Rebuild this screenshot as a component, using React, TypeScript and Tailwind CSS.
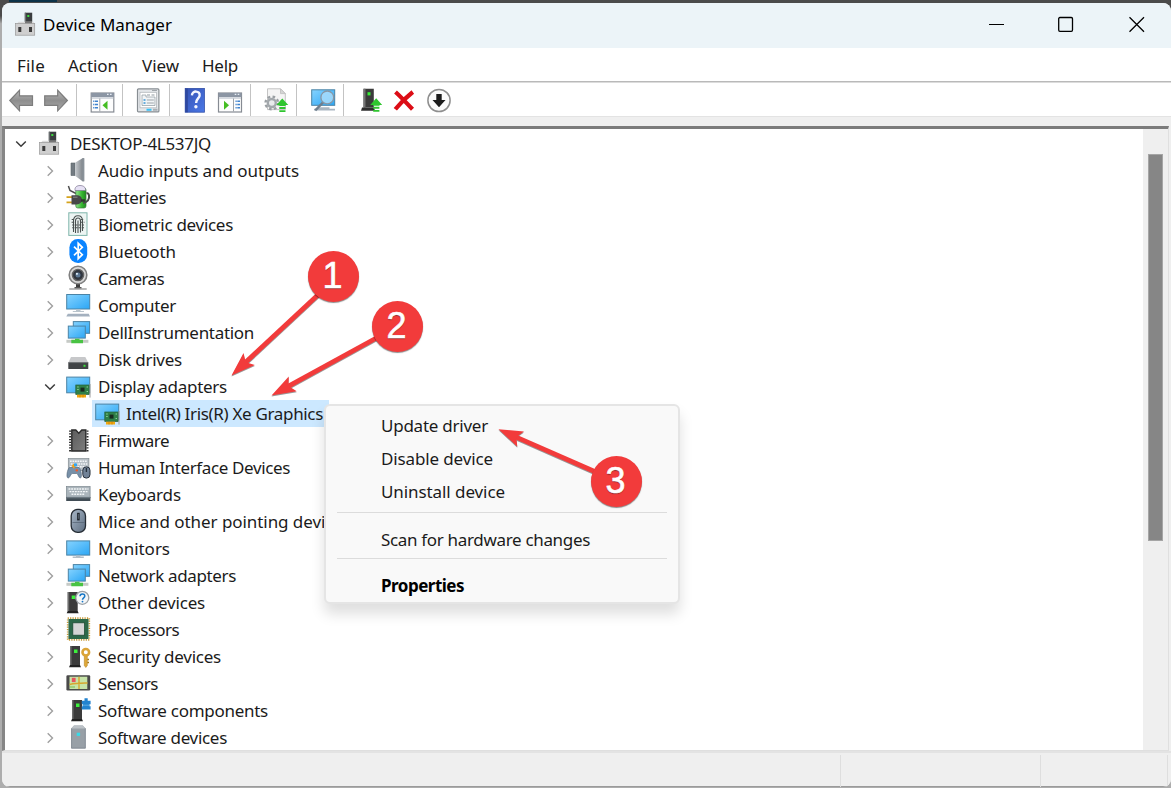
import React, { useLayoutEffect, useRef, useState } from 'react';

interface LabelProps {
  text: string;
  width: number;
  className?: string;
}

// Text run whose tracking is adjusted so it fills a fixed advance width
const Label: React.FC<LabelProps> = ({ text, width, className = '' }) => {
  const ref = useRef<HTMLSpanElement>(null);
  const [spacing, setSpacing] = useState(0);

  useLayoutEffect(() => {
    if (!ref.current) return;
    const natural = ref.current.getBoundingClientRect().width;
    setSpacing((width - natural) / text.length);
  }, [text, width]);

  return (
    <span ref={ref} style={{ letterSpacing: `${spacing}px` }} className={`whitespace-nowrap ${className}`}>
      {text}
    </span>
  );
};

// Shared gradients for the device icons
const IconDefs = () => (
  <svg width="0" height="0" className="absolute">
    <defs>
      <linearGradient id="screen" x1="0" y1="0" x2="1" y2="1">
        <stop offset="0" stopColor="#85d3ff" />
        <stop offset="1" stopColor="#2ba6f5" />
      </linearGradient>
      <linearGradient id="steel" x1="0" y1="0" x2="1" y2="0">
        <stop offset="0" stopColor="#c9cdd1" />
        <stop offset="1" stopColor="#70767c" />
      </linearGradient>
      <linearGradient id="arrowGray" x1="0" y1="0" x2="0" y2="1">
        <stop offset="0" stopColor="#b9b9b9" />
        <stop offset="0.5" stopColor="#8e8e8e" />
        <stop offset="1" stopColor="#a9a9a9" />
      </linearGradient>
      <linearGradient id="green" x1="0" y1="0" x2="1" y2="0">
        <stop offset="0" stopColor="#92e58c" />
        <stop offset="0.6" stopColor="#35b52f" />
        <stop offset="1" stopColor="#208b20" />
      </linearGradient>
      <linearGradient id="helpBlue" x1="0" y1="0" x2="1" y2="1">
        <stop offset="0" stopColor="#3552b4" />
        <stop offset="1" stopColor="#4a78e6" />
      </linearGradient>
      <linearGradient id="mouse" x1="0" y1="0" x2="1" y2="1">
        <stop offset="0" stopColor="#a9b8c8" />
        <stop offset="1" stopColor="#5d6d80" />
      </linearGradient>
      <linearGradient id="chip" x1="0" y1="0" x2="1" y2="1">
        <stop offset="0" stopColor="#5c5c5c" />
        <stop offset="1" stopColor="#7d7d7d" />
      </linearGradient>
    </defs>
  </svg>
);

const Screen = ({ x, y, w, h }: { x: number; y: number; w: number; h: number }) => (
  <rect x={x + 0.5} y={y + 0.5} width={w - 1} height={h - 1} fill="url(#screen)" stroke="#4a83a5" />
);

const Tower = ({ x, y = 2 }: { x: number; y?: number }) => (
  <g>
    <rect x={x} y={y} width="10" height="19" fill="#3b3b3b" />
    <path d={`M${x} ${y}h1.5v19h-1.5z`} fill="#6d6d6d" />
    <rect x={x + 4} y={y + 3.5} width="3.5" height="3.5" fill="#3df03d" />
    <path d={`M${x} ${y + 19}h10l1 2.3h-12z`} fill="#222" />
  </g>
);

const GreenUp = ({ x, y }: { x: number; y: number }) => (
  <g transform={`translate(${x} ${y})`} fill="#2fc52f">
    <path d="M6 0l6 6.6H9.3v.9H2.9v-.9H0z" />
    <path d="M3 8.5h6.2v2H3zM3 11.7h6.2v1.8H3z" />
  </g>
);

const drawings: Record<string, React.ReactNode> = {
  pc: (
    <g>
      <rect x="10.8" y="0.7" width="7.4" height="11" fill="#3a3d3f" />
      <path d="M10.8.7h1.3v10h-1.3z" fill="#686c6e" />
      <rect x="13.3" y="3" width="2" height="2" fill="#3edb3e" />
      <path d="M4.5 9.7h15l1.4 4H1.3z" fill="#dadada" />
      <rect x="1.6" y="11.6" width="19.1" height="11.6" fill="#cfcfcf" stroke="#979797" strokeWidth=".7" />
      <path d="M11 9.5h7v1.8h-7z" fill="#777" />
      <rect x="4.3" y="15" width="3" height="5" fill="#3b3b3b" />
      <rect x="15" y="15" width="3" height="5" fill="#3b3b3b" />
    </g>
  ),
  audio: (
    <g>
      <path d="M5 5h4v12.5H5z" fill="#737b82" stroke="#5d646a" strokeWidth=".6" />
      <path d="M9 4.8L16.5.2h1.7v23h-1.7L9 17.8z" fill="url(#steel)" />
      <path d="M16.3.2h1.9v23h-1.9z" fill="#8a9299" />
    </g>
  ),
  battery: (
    <g>
      <path d="M2.4.9L4 5.4 11 9" fill="none" stroke="#4f4f4f" strokeWidth="1.5" />
      <rect x="9.8" y="3" width="10.2" height="20" rx="2" fill="url(#green)" stroke="#3c7a3c" strokeWidth=".7" />
      <path d="M9 5.5C8.5 2 11 .5 14 .5s6 1.5 5.5 5z" fill="#e6e1f4" stroke="#7d7690" strokeWidth=".7" />
      <path d="M17 18c5-1 6.5-4 6-7.500q-.6-3-2.500-2" fill="none" stroke="#4a4a4a" strokeWidth="2" />
      <path d="M.5 12.1h6M.5 17.4h6" stroke="#d5a31c" strokeWidth="1.8" />
      <path d="M5.5 10.300h5c3.500 0 5.500 2 5.500 4.500s-2 4.700-5.500 4.700h-5z" fill="#484848" />
      <path d="M7 12.200h4.500" stroke="#8a8a8a" strokeWidth="1" />
      <path d="M15 15.500h4" fill="none" stroke="#333" strokeWidth="2.4" />
    </g>
  ),
  biometric: (
    <g>
      <rect x="2.8" y=".8" width="18.2" height="22.6" fill="#edf5f3" stroke="#7fb5ab" />
      <g fill="none" stroke="#4a5150" strokeWidth="1.1">
        <path d="M7.5 20v-11q0-5.2 4.5-5.2t4.5 5.2v10" />
        <path d="M9.5 21v-12q0-3 2.5-3t2.5 3v11.5" />
        <path d="M12 21V8.5" />
        <path d="M5.7 7.5h3M5.6 10.2h4M15 7.5h3M14.5 10.2h4M6.2 13h12M6.2 15.8h12" strokeDasharray="2.2 1" />
      </g>
    </g>
  ),
  bluetooth: (
    <g>
      <rect x="3.4" y="0" width="17.8" height="24" rx="8.5" fill="#0a84ff" />
      <path d="M8 7.7l8.3 8-4.1 4V4.3l4.1 4-8.3 8" fill="none" stroke="#fff" strokeWidth="1.7" />
    </g>
  ),
  camera: (
    <g>
      <path d="M10 18h4v4h-4z" fill="#3d3d3d" />
      <path d="M3.3 23h17.4" stroke="#9c9c9c" strokeWidth="1.4" />
      <path d="M8.5 21.7h7" stroke="#555" strokeWidth="1.4" />
      <circle cx="12" cy="9" r="8.8" fill="#d9d9d9" stroke="#808080" strokeWidth="1.6" />
      <circle cx="12" cy="9" r="5.6" fill="#30363f" stroke="#656565" strokeWidth="1.4" />
      <circle cx="12" cy="9" r="2.5" fill="#5d7894" />
      <circle cx="10.9" cy="7.8" r="1.1" fill="#dbe9f5" />
    </g>
  ),
  computer: (
    <g>
      <Screen x={0.2} y={1} w={24} h={15.5} />
      <path d="M10 16.5h4.5v1.6H18v1H6.8v-1H10z" fill="#b9c4cc" />
      <path d="M1.8 20.8h21l1.2 2.7H.3z" fill="#a4b1bf" />
    </g>
  ),
  network: (
    <g>
      <Screen x={6.8} y={1.1} w={17.3} h={12.7} />
      <Screen x={1.8} y={5.6} w={18} h={13} />
      <path d="M.4 21.3h22" stroke="#c6cac6" strokeWidth="3" />
      <path d="M9 18.8h4.5v1H17v3.4H5.3v-3.4H9z" fill="#49c343" />
    </g>
  ),
  disk: (
    <g>
      <path d="M5 10h14.3l3 5.7H2.3z" fill="#c7c8ca" />
      <rect x="2.3" y="15.5" width="20" height="6.5" rx=".6" fill="#414446" />
      <path d="M2.3 15.6h20" stroke="#6f7274" />
      <rect x="17.5" y="17.8" width="2" height="2" fill="#39e339" />
    </g>
  ),
  display: (
    <g>
      <Screen x={0.2} y={2.6} w={24} h={16.7} />
      <rect x="9.8" y="11" width="13.4" height="9.5" fill="#2f8049" stroke="#24613a" strokeWidth=".7" />
      <rect x="14.500" y="13.600" width="4" height="4" fill="#1a2a20" />
      <path d="M11.2 13h1.5M11.2 15.5h1.5M20.6 13h1.4M20.6 17.5h1.4" stroke="#8fd39c" />
      <path d="M11 20.7h9v2.8h-9z" fill="#f2a80f" />
      <path d="M14 20.7v2.8M17 20.7v2.8" stroke="#c87d06" strokeWidth=".7" />
      <path d="M24 10v13.6" stroke="#999" />
    </g>
  ),
  firmware: (
    <g>
      <path d="M5.8 2h4l3 3.200 3-3.200h4v21H5.800z" fill="url(#chip)" stroke="#2b2b2b" strokeWidth="1.4" />
      <path d="M4.1 2.500v21M21.500 2.500v21" stroke="#2b2b2b" strokeWidth="2" strokeDasharray="1.3 1.5" />
    </g>
  ),
  hid: (
    <g>
      <rect x="2.3" y="3.6" width="20.6" height="12" fill="#b8c0c6" stroke="#818a91" strokeWidth=".7" />
      <path d="M4 6.3h17.5M4.8 9h16.5M4 11.7h17" stroke="#f2f5f7" strokeWidth="1.4" strokeDasharray="1.7 .8" />
      <path d="M3.5 12.5h9.5c2.5 2.5 3 9.5 1.8 10.3-2 1-2.5-3.6-4-4.3H6.3c-2 .6-2.5 5.3-4.6 4.3-1.5-.8-.6-8.3 1.8-10.3z" fill="#7890a8" stroke="#4d6175" strokeWidth=".6" />
      <path d="M5.5 11l2.3-2.6 2.3 2.6-2.3 2.6z" fill="#f5a11b" />
      <path d="M8 8.4h3v3H8z" fill="#32a5f0" />
      <circle cx="10.8" cy="15.3" r="1.2" fill="#f15a29" />
      <rect x="16.8" y="11.8" width="7.2" height="11.3" rx="3.5" fill="#718297" stroke="#27303b" />
      <path d="M20.4 13v4" stroke="#27303b" strokeWidth="1.3" />
    </g>
  ),
  keyboard: (
    <g>
      <rect x=".5" y="4.6" width="23.6" height="10.6" fill="#aab4bb" stroke="#7a868e" strokeWidth=".7" />
      <path d="M2.5 7h20M3.5 9.6h18M5.5 12.3h13.5" stroke="#f4f7f9" strokeWidth="1.4" strokeDasharray="1.9 .8" />
      <path d="M.2 15h24.2v4H.2z" fill="#424d56" />
      <path d="M.2 15h24.2v1.3H.2z" fill="#6c7881" />
    </g>
  ),
  mouse: (
    <g>
      <rect x="5.2" y=".4" width="14.3" height="23" rx="6.5" fill="url(#mouse)" stroke="#252c34" strokeWidth="1.3" />
      <path d="M6.5 13.5h12" stroke="#536171" strokeWidth=".7" />
      <path d="M12.4 3.8v7.6" stroke="#1e242b" strokeWidth="2.6" />
      <path d="M12.4 5v4.8" stroke="#6a7888" strokeWidth=".7" />
    </g>
  ),
  monitor: (
    <g>
      <Screen x={0.2} y={4.4} w={24} h={15.2} />
      <path d="M10 19.6h4.4v1h3.4v1.3H6.7v-1.3H10z" fill="#b3bec7" />
    </g>
  ),
  other: (
    <g>
      <Tower x={1.7} />
      <circle cx="16.3" cy="7.8" r="6.5" fill="#f3f6f8" stroke="#9aa0a5" strokeWidth="1.3" />
      <path d="M14 6.2c0-3 4.8-3 4.8-.2 0 1.9-2.3 1.8-2.3 3.7" fill="none" stroke="#1676c5" strokeWidth="1.5" />
      <circle cx="16.5" cy="11.6" r=".9" fill="#1676c5" />
    </g>
  ),
  processor: (
    <g>
      <rect x="1.7" y="1.2" width="21.6" height="21.6" fill="none" stroke="#c79a39" strokeWidth="1.7" strokeDasharray="1.2 1.2" />
      <rect x="2.5" y="2" width="20" height="20" fill="#2c6849" />
      <rect x="6.8" y="5.8" width="11.8" height="12.4" fill="#d5d5d5" stroke="#1d4932" strokeWidth=".8" />
    </g>
  ),
  security: (
    <g>
      <Tower x={4} />
      <path d="M18.3 11h3v10.5l-1.5 2-1.5-2z" fill="#e0a93a" stroke="#a87818" strokeWidth=".5" />
      <circle cx="19.8" cy="8.3" r="3.3" fill="none" stroke="#dba437" strokeWidth="2.6" />
      <path d="M21.3 15.5h1.7M21.3 18.5h1.7" stroke="#a87818" strokeWidth="1.4" />
    </g>
  ),
  sensors: (
    <g>
      <rect x=".4" y="4.2" width="23.8" height="15.3" rx="1.2" fill="#4a4a4a" />
      <rect x="3.5" y="5.7" width="17.8" height="12.3" fill="#c7e4a8" />
      <path d="M3.5 13.5c4-1 7-1.7 18-1.5M13 5.7V18" fill="none" stroke="#d6a72e" strokeWidth="1.4" />
      <path d="M5.8 6.8h3.8v4.3H5.8z" fill="#e8545d" />
      <path d="M4 15h5v2H4z" fill="#a2cf7b" />
    </g>
  ),
  component: (
    <g>
      <Tower x={6} />
      <path d="M15.8 2.8h2.700V.3h3.2v2.5h2.900v3.500h-1.200v2h1.200v3.200H15.800v-3.200h1.200v-2h-1.200z" fill="#2383cf" />
      <path d="M16 7.200h8" stroke="#6bb6ea" strokeWidth=".8" />
    </g>
  ),
  softdevice: (
    <g>
      <path d="M5.2 3.4L8 .5h8.8l2.8 2.9v20H5.2z" fill="#98a0a7" />
      <path d="M5.2 3.4L8 .5h8.8l2.8 2.9z" fill="#bcc2c7" />
      <path d="M5.6 3.4v19.7h13.7V3.4" fill="none" stroke="#7e878f" strokeWidth=".8" />
      <path d="M10.7 7.7h3.4v3.2h-3.4z" fill="#37dbe8" />
    </g>
  ),
  // toolbar
  back: (
    <path d="M.8 12.500L10.5 2.300v5.5h13v9.5h-13v5.5z" fill="url(#arrowGray)" stroke="#7d7d7d" strokeWidth="1.2" />
  ),
  forward: (
    <path d="M23.4 12.500L13.7 2.300v5.5H.7v9.5h13v5.5z" fill="url(#arrowGray)" stroke="#7d7d7d" strokeWidth="1.2" />
  ),
  panelLeft: (
    <g>
      <rect x="1.2" y="5" width="22.6" height="19" fill="#fdfdfd" stroke="#868b93" strokeWidth="1.2" />
      <path d="M1.2 5h22.6v4H1.2z" fill="#8c96a4" />
      <path d="M1.8 10h21.5" stroke="#c9ced6" strokeWidth="1.5" />
      <path d="M17 6.300h1.6M20 6.300h1.6" stroke="#e7edf5" strokeWidth="1.3" />
      <path d="M9.8 10.500v13" stroke="#9da3aa" />
      <path d="M3.2 13.300h4.8M3.2 16.500h4.8M3.2 19.700h4.8" stroke="#3d82cf" strokeWidth="1.6" strokeDasharray="1.2 .6 5" />
      <path d="M17.5 12.800v9l-5-4.5z" fill="#44bd22" />
    </g>
  ),
  panelRight: (
    <g>
      <rect x=".5" y="5" width="23" height="19" fill="#fdfdfd" stroke="#868b93" strokeWidth="1.2" />
      <path d="M.5 5h23v4H.5z" fill="#8c96a4" />
      <path d="M1 10h22" stroke="#c9ced6" strokeWidth="1.5" />
      <path d="M16.7 6.300h1.6M19.7 6.300h1.6" stroke="#e7edf5" strokeWidth="1.3" />
      <path d="M15.5 10.500v13" stroke="#9da3aa" />
      <path d="M17.500 13.300h4.5M17.5 16.500h4.5M17.5 19.700h4.5" stroke="#3d82cf" strokeWidth="1.6" strokeDasharray="1.2 .6 5" />
      <path d="M6 12.800v9l5-4.5z" fill="#44bd22" />
    </g>
  ),
  properties: (
    <g>
      <rect x="1.5" y=".9" width="21.4" height="23" rx="1" fill="#e4e7ea" stroke="#878d92" strokeWidth="1.2" />
      <path d="M16 2.5h5" stroke="#a1a7ac" strokeWidth="1" />
      <rect x="4" y="4.3" width="16.5" height="15.5" fill="#fff" stroke="#b3b8bd" strokeWidth=".8" />
      <path d="M6 7h4v2h9v8.500H6z" fill="#f2f5f7" stroke="#8d989f" strokeWidth=".7" />
      <path d="M11 7h3M15.500 7h3" stroke="#8d989f" strokeWidth="1" />
      <path d="M7.500 12h2M7.500 15h2" stroke="#3a95d5" strokeWidth="1.3" />
      <path d="M10.800 12h7M10.800 15h7" stroke="#9ba3a9" strokeWidth="1.1" />
      <path d="M10.5 20.8h5v2h-5z" fill="#37c1f7" />
      <path d="M17 20.8h4.5v2H17z" fill="#a9afb4" />
    </g>
  ),
  help: (
    <g>
      <rect x="2.2" y=".4" width="19.2" height="23.8" fill="url(#helpBlue)" stroke="#3350a8" strokeWidth=".8" />
      <path d="M2.2.4h2.6v23.8H2.2z" fill="#2e489f" />
      <path d="M8.9 7.4c.2-5.3 8.6-5 7.7.3-.5 2.7-3.5 3.2-3.5 7.3" fill="none" stroke="#f3f6ff" strokeWidth="2.4" />
      <circle cx="12.9" cy="18.7" r="1.7" fill="#f3f6ff" />
    </g>
  ),
  gear: (
    <g>
      <path d="M3.5.8h13l4.8 4.8v16H3.5z" fill="#f4f4f4" stroke="#bdbdbd" strokeWidth=".9" />
      <path d="M16.5.8v4.8h4.8z" fill="#d5d5d5" stroke="#bdbdbd" strokeWidth=".8" />
      <circle cx="7.8" cy="15" r="6.3" fill="none" stroke="#9a9fa3" strokeWidth="2.4" strokeDasharray="2.6 2.35" />
      <circle cx="7.8" cy="15" r="4" fill="#e9ebec" stroke="#a3a8ac" strokeWidth="2.4" />
      <GreenUp x={12.3} y={10.5} />
    </g>
  ),
  scan: (
    <g>
      <Screen x={0.2} y={1.3} w={24} h={16.5} />
      <path d="M6 19.2h12.5v1.6H24v1.8H3v-1.8h3z" fill="#aab6c1" />
      <path d="M12.3 14.2L4.3 22.3" stroke="#6f7f8e" strokeWidth="2.4" />
      <circle cx="16.3" cy="9.4" r="6.4" fill="#a7dcfb" fillOpacity=".85" stroke="#8897a5" strokeWidth="1.3" />
    </g>
  ),
  update: (
    <g>
      <path d="M4.5.8h10.3v18.8H4.5z" fill="#3b3b3b" />
      <path d="M4.5.8h2v18.8h-2z" fill="#757575" />
      <path d="M3 19.5h12l1 3.3H2z" fill="#2e2e2e" />
      <rect x="8.5" y="4.2" width="3" height="3.2" fill="#37ed37" />
      <GreenUp x={11.2} y={10.3} />
    </g>
  ),
  remove: (
    <path d="M3.5 4C8 8 16 16.500 20.5 21.300M20.8 4C15 8.500 8 15.500 3.3 21.300" fill="none" stroke="#dc0d16" strokeWidth="4.2" />
  ),
  disable: (
    <g>
      <circle cx="12" cy="12.500" r="11.1" fill="#fbfbfb" stroke="#8f8f8f" strokeWidth="1.5" />
      <path d="M9.3 6h5.4v6h3.8L12 19.2l-6.5-7.2h3.8z" fill="#1c1c1c" />
    </g>
  )
};

const Icon = ({ name, className = '' }: { name: string; className?: string }) => (
  <svg viewBox="0 0 24 24" className={`size-6 shrink-0 overflow-visible ${className}`}>
    {drawings[name]}
  </svg>
);

interface Device {
  icon: string;
  text: string;
  width: number;
  open?: boolean;
}

const devices: Device[] = [
  { icon: 'audio', text: 'Audio inputs and outputs', width: 201 },
  { icon: 'battery', text: 'Batteries', width: 68 },
  { icon: 'biometric', text: 'Biometric devices', width: 135 },
  { icon: 'bluetooth', text: 'Bluetooth', width: 78 },
  { icon: 'camera', text: 'Cameras', width: 66 },
  { icon: 'computer', text: 'Computer', width: 78 },
  { icon: 'network', text: 'DellInstrumentation', width: 156 },
  { icon: 'disk', text: 'Disk drives', width: 84 },
  { icon: 'display', text: 'Display adapters', width: 129, open: true },
  { icon: 'firmware', text: 'Firmware', width: 71 },
  { icon: 'hid', text: 'Human Interface Devices', width: 192 },
  { icon: 'keyboard', text: 'Keyboards', width: 83 },
  { icon: 'mouse', text: 'Mice and other pointing devices', width: 253 },
  { icon: 'monitor', text: 'Monitors', width: 72 },
  { icon: 'network', text: 'Network adapters', width: 138 },
  { icon: 'other', text: 'Other devices', width: 107 },
  { icon: 'processor', text: 'Processors', width: 81 },
  { icon: 'security', text: 'Security devices', width: 123 },
  { icon: 'sensors', text: 'Sensors', width: 60 },
  { icon: 'component', text: 'Software components', width: 170 },
  { icon: 'softdevice', text: 'Software devices', width: 129 }
];

const Chevron = ({ open }: { open?: boolean }) => (
  <svg viewBox="0 0 12 12" className="size-3 shrink-0" fill="none">
    {open ? (
      <path d="M1.2 3.5L6 8.3l4.8-4.8" stroke="#3c3c3c" strokeWidth="1.5" />
    ) : (
      <path d="M3.7 1.2L8.5 6l-4.8 4.8" stroke="#a0a0a0" strokeWidth="1.4" />
    )}
  </svg>
);

const DeviceRow = ({ device }: { device: Device }) => (
  <div className="flex h-[27px] shrink-0 items-center pl-[39px]">
    <Chevron open={device.open} />
    <Icon name={device.icon} className="-mt-0.5 ml-[10px]" />
    <Label text={device.text} width={device.width} className="ml-2" />
  </div>
);

const Separator = ({ className = '' }: { className?: string }) => (
  <div className={`h-8 w-px shrink-0 bg-[#c3c3c3] ${className}`} />
);

const Toolbar = () => (
  <div className="flex h-[33px] shrink-0 items-center bg-white pl-[7px] pt-px">
    <Icon name="back" />
    <Icon name="forward" className="ml-[11px]" />
    <Separator className="ml-2" />
    <Icon name="panelLeft" className="ml-[13px]" />
    <Separator className="ml-2" />
    <Icon name="properties" className="ml-[13px]" />
    <Separator className="ml-[9px]" />
    <Icon name="help" className="ml-[13px]" />
    <Icon name="panelRight" className="ml-[11px]" />
    <Separator className="ml-2" />
    <Icon name="gear" className="ml-[13px]" />
    <Separator className="ml-2" />
    <Icon name="scan" className="ml-[14px]" />
    <Separator className="ml-2" />
    <Icon name="update" className="ml-[15px]" />
    <Icon name="remove" className="ml-[9px]" />
    <Icon name="disable" className="ml-[11px]" />
  </div>
);

const ContextMenu = () => (
  <div className="absolute left-[324px] top-[404px] flex h-[200px] w-[356px] flex-col rounded-md border-2 border-[#e5e5e5] bg-[#f9f9f9] pt-[3px] shadow-[0_10px_14px_rgba(0,0,0,0.13)]">
    <div className="flex h-[33px] items-center pl-[55px]"><Label text="Update driver" width={107} /></div>
    <div className="flex h-[33px] items-center pl-[55px]"><Label text="Disable device" width={112} /></div>
    <div className="flex h-[33px] items-center pl-[55px]"><Label text="Uninstall device" width={124} /></div>
    <div className="mx-[11px] mt-1 h-px bg-[#dcdcdc]" />
    <div className="mt-[10px] flex h-[33px] items-center pl-[55px]"><Label text="Scan for hardware changes" width={209} /></div>
    <div className="mx-[11px] mt-[2px] h-px bg-[#dcdcdc]" />
    <div className="mt-[10px] flex h-[33px] items-center pl-[55px]"><Label text="Properties" width={83} className="font-bold text-black" /></div>
  </div>
);

const arrows = [
  { from: [320, 293], tip: [231.5, 375.5] },
  { from: [380, 336], tip: [271.5, 395.5] },
  { from: [598, 473], tip: [498.5, 429.3] }
];

// Callout arrows and their numbered circles
const Annotations = () => (
  <>
    <svg viewBox="0 0 1171 788" className="pointer-events-none absolute left-0 top-0 h-[788px] w-[1171px] drop-shadow-[0_1px_0.5px_rgba(0,0,0,0.4)]">
      {arrows.map(({ from, tip }, i) => {
        const dx = from[0] - tip[0];
        const dy = from[1] - tip[1];
        const angle = (Math.atan2(dy, dx) * 180) / Math.PI;
        return (
          <g key={i} fill="#f23b3b" transform={`translate(${tip[0]} ${tip[1]}) rotate(${angle})`}>
            <path d="M0 0L24.200-8.300 20.800-2.4V2.4L24.200 8.300z" />
            <rect x="20" y="-2.4" width={Math.hypot(dx, dy) - 20} height="4.8" />
          </g>
        );
      })}
    </svg>
    <Badge n={1} className="left-[308px] top-[251px]" />
    <Badge n={2} className="left-[372px] top-[301px]" />
    <Badge n={3} className="left-[591px] top-[456px]" />
  </>
);

const Badge = ({ n, className }: { n: number; className: string }) => (
  <div className={`absolute flex size-[51px] items-center justify-center rounded-full bg-[#f23b3b] pb-0.5 pr-0.5 font-['Liberation_Sans',sans-serif] text-[36px] leading-none text-white shadow-[0_1px_1px_rgba(0,0,0,0.45)] ${className}`}>
    <span className="[-webkit-text-stroke:0.6px_white] [text-shadow:0_1px_1px_rgba(0,0,0,0.45)]">{n}</span>
  </div>
);

const App: React.FC = () => {
  return (
    <div className="relative h-[788px] w-[1171px] overflow-hidden bg-gradient-to-b from-[#4b4b4b] from-2% to-[#adadad] to-3% pl-0.5 pt-[3px] font-['Noto_Sans','Open_Sans',sans-serif] text-[17px] leading-none text-[#1b1b1b]">
      <IconDefs />
      <div className="absolute left-[9px] top-0 h-0.5 w-12 bg-[#0d3349]" />

      <div className="flex h-[784px] flex-col overflow-hidden rounded-lg bg-[#efefef]">
        {/* Title bar */}
        <div className="flex h-[45px] shrink-0 items-center bg-[#ecf4f8] pb-[3px] pl-3">
          <Icon name="pc" />
          <Label text="Device Manager" width={129} className="ml-[5px] text-black" />
          <svg viewBox="0 0 158 18" className="ml-auto mr-[25px] h-[18px] w-[158px]" fill="none" stroke="#000" strokeWidth="1.3">
            <path d="M1 9.500h15" strokeWidth="1" />
            <rect x="70.7" y="2.500" width="13.8" height="13.8" rx="1.2" />
            <path d="M141.5 2.200l14.5 14.5M156 2.200l-14.5 14.5" />
          </svg>
        </div>

        {/* Menu bar */}
        <div className="flex h-[33px] shrink-0 items-center bg-white pl-[15px] pt-0.5">
          <Label text="File" width={28} />
          <Label text="Action" width={50} className="ml-[23px]" />
          <Label text="View" width={37} className="ml-6" />
          <Label text="Help" width={36} className="ml-[23px]" />
        </div>
        <div className="h-0.5 shrink-0 border-t border-[#b9b9b9] bg-[#dcdcdc]" />

        <Toolbar />

        <div className="h-2.5 shrink-0 border-t border-[#e3e3e3] bg-[#efefef]" />

        {/* Device tree */}
        <div className="mr-0.5 flex h-[625px] shrink-0 border-b border-l-[3px] border-r border-t-[3px] border-b-[#dfdfdf] border-l-[#868686] border-r-[#dfdfdf] border-t-[#7b7b7b] bg-white">
          <div className="-ml-[3px] flex flex-1 flex-col overflow-hidden pl-[3px] pt-[1px]">
            <div className="flex h-[27px] shrink-0 items-center pl-[10px]">
              <Chevron open />
              <Icon name="pc" className="-mt-0.5 ml-[11px]" />
              <Label text="DESKTOP-4L537JQ" width={141} className="ml-[8px]" />
            </div>
            {devices.slice(0, 9).map((device) => (
              <DeviceRow key={device.text} device={device} />
            ))}
            <div className="ml-[87px] flex h-[27px] w-[237px] shrink-0 items-center bg-[#cce8ff] pl-[3px]">
              <Icon name="display" className="-mt-0.5" />
              <Label text="Intel(R) Iris(R) Xe Graphics" width={197} className="ml-[7px]" />
            </div>
            {devices.slice(9).map((device) => (
              <DeviceRow key={device.text} device={device} />
            ))}
          </div>
          <div className="w-[25px] bg-[#efefef] pl-[5px] pt-[25px]">
            <div className="h-[387px] w-[15px] border border-[#a5a5a5] bg-[#868686]" />
          </div>
        </div>

        {/* Status bar */}
        <div className="flex flex-1 border-t-2 border-[#e3e3e3] bg-[#efefef] pt-0.5 shadow-[inset_0_-1px_0_#9b9b9b]">
          <div className="w-[839px] border-r border-[#dedede]" />
          <div className="w-[200px] border-r border-[#dedede]" />
          <div className="w-[127px] border-r border-[#dedede]" />
        </div>
      </div>

      <ContextMenu />
      <Annotations />
    </div>
  );
};

export default App;
